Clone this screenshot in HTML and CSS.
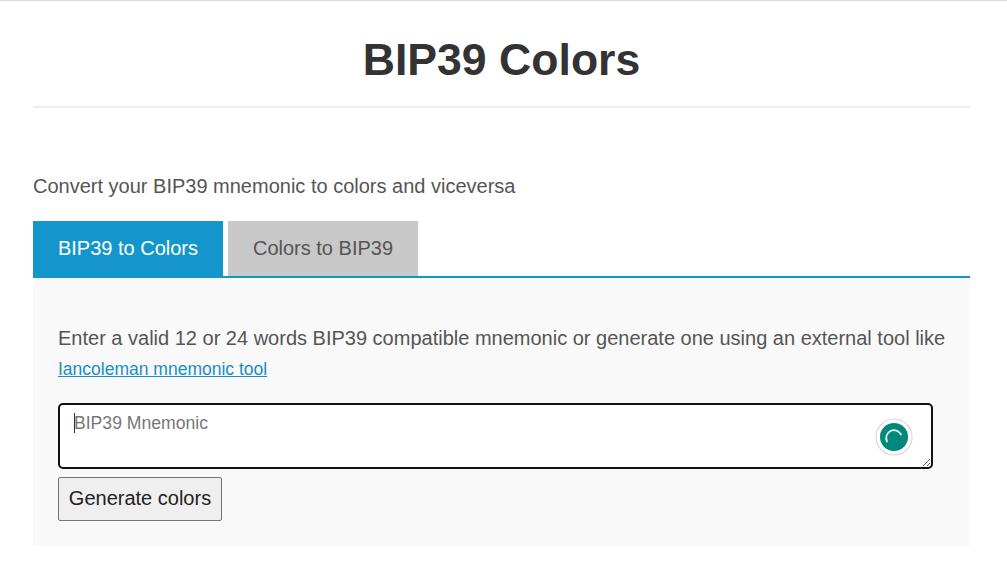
FILE: index.html
```html
<!DOCTYPE html>
<html lang="en">
<head>
<meta charset="utf-8">
<title>BIP39 Colors</title>
<link rel="stylesheet" href="styles.css">
</head>
<body>
<main class="page">
  <header class="header"><h1 class="title">BIP39 Colors</h1></header>
  <p class="intro">Convert your BIP39 mnemonic to colors and viceversa</p>
  <nav class="tabs">
    <a class="tab tab-active">BIP39 to Colors</a>
    <a class="tab">Colors to BIP39</a>
  </nav>
  <section class="panel">
    <p class="lead">Enter a valid 12 or 24 words BIP39 compatible mnemonic or generate one using an external tool like <a class="link" href="#">Iancoleman mnemonic tool</a></p>
    <div class="field">
      <textarea class="input" placeholder="BIP39 Mnemonic"></textarea>
      <span class="caret"></span>
      <svg class="badge" width="38" height="38" viewBox="0 0 38 38" aria-hidden="true">
        <circle cx="19" cy="19" r="18" fill="#fff" stroke="#d8d8d8" stroke-width="1.2"/>
        <circle cx="19" cy="19" r="14" fill="#00897b"/>
        <path d="M12 23.5A7.8 7.8 0 1 1 26 16.5" fill="none" stroke="#e6f4f1" stroke-width="1.8" stroke-linecap="round"/>
      </svg>
    </div>
    <button class="button" type="button">Generate colors</button>
  </section>
</main>
</body>
</html>
```

FILE: styles.css
```css
* { box-sizing: border-box; }
html, body { margin: 0; padding: 0; }
body {
  background: #fff;
  border-top: 1px solid #ddd;
  color: #555;
  font-family: "Liberation Sans", Arial, sans-serif;
  font-size: 20px;
  line-height: 1.5;
}
.page { padding: 0 37px 0 33px; }
.header {
  height: 107px;
  padding-top: 35px;
  border-bottom: 2px solid #eee;
}
.title {
  margin: 0;
  color: #333;
  font-size: 44.6px;
  font-weight: 700;
  line-height: 48px;
  text-align: center;
}
.intro { margin: 65px 0 21px; line-height: 27px; }
.tabs {
  display: flex;
  gap: 5px;
  height: 57px;
  border-bottom: 2px solid #1496cc;
}
.tab {
  display: flex;
  align-items: center;
  justify-content: center;
  width: 190px;
  height: 55px;
  padding-bottom: 2px;
  background: #c8c8c8;
  color: #555;
}
.tab-active { height: 57px; padding-bottom: 4px; background: #1496cc; color: #fff; }
.panel {
  height: 268px;
  padding: 45px 20px 0 25px;
  background: #f9f9f9;
}
.lead { margin: 0 0 18px; line-height: 31px; }
.link { display: block; color: #1a8ec4; font-size: 17.5px; text-decoration: underline; }
.field { position: relative; width: 875px; height: 66px; }
.input {
  display: block;
  width: 100%;
  height: 100%;
  padding: 6px 14px;
  background: #fff;
  border: 2px solid #111;
  border-radius: 5px;
  outline: none;
  color: #555;
  font: 18px/24px "Liberation Sans", Arial, sans-serif;
}
.input::placeholder { color: #777; font-size: 17.6px; opacity: 1; }
.caret {
  position: absolute;
  left: 16px;
  top: 10px;
  width: 1px;
  height: 20px;
  background: #333;
}
.badge { position: absolute; right: 20px; top: 15px; }
.button {
  display: block;
  width: 164px;
  height: 44px;
  margin-top: 8px;
  padding: 0 0 1px;
  background: #efefef;
  border: 1px solid #767676;
  border-radius: 2px;
  color: #222;
  font: 20px "Liberation Sans", Arial, sans-serif;
}
```
